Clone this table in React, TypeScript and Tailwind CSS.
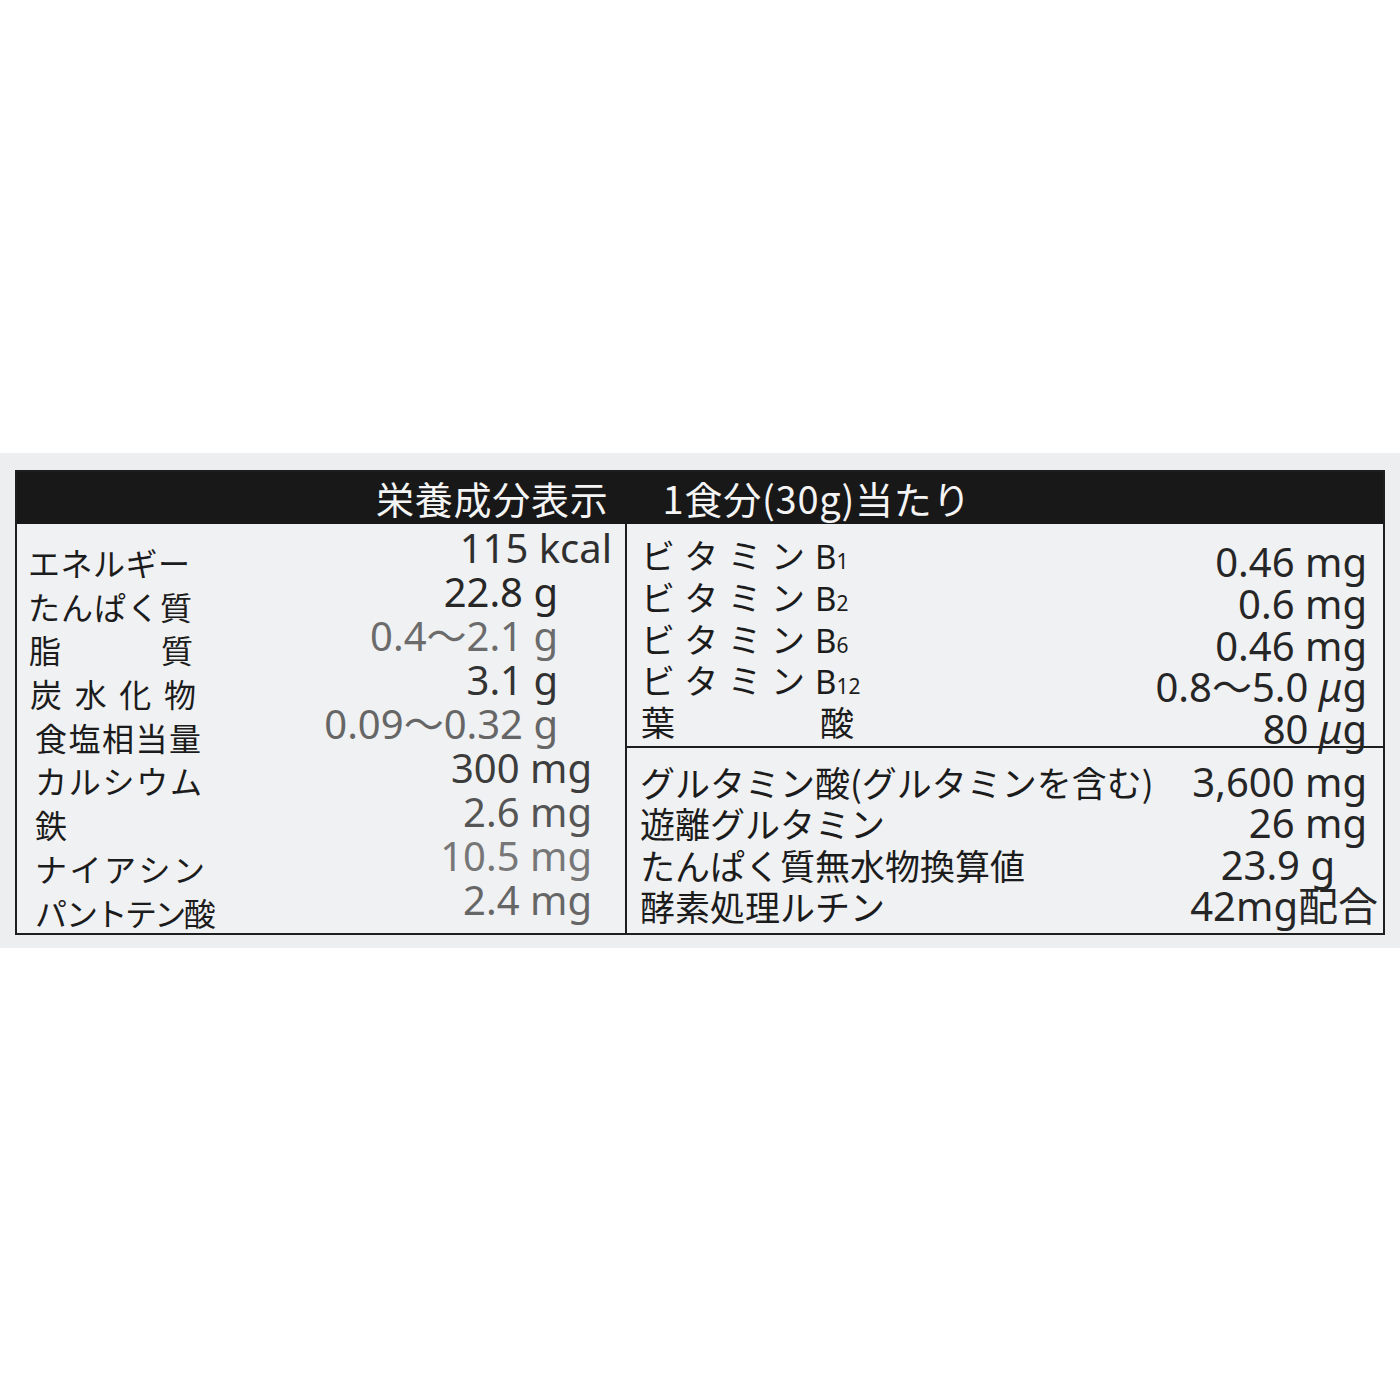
import type { ReactNode } from "react"

const cjk = "font-['Noto_Sans_CJK_JP','Noto_Sans',sans-serif]"
const num = "font-['Noto_Sans','Noto_Sans_CJK_JP',sans-serif]"

const Spread = ({ text, w }: { text: string; w: string }) => (
	<span className={`flex justify-between ${w}`}>
		{[...text].map((c, i) => (
			<span key={i}>{c}</span>
		))}
	</span>
)

const mu = (head: string) => (
	<>
		{head} <span className="italic">μ</span>g
	</>
)

interface LeftRow {
	label: string
	w: string
	pl: string
	value: string
	pr: string
	tone: string
}

const leftRows: LeftRow[] = [
	{ label: "エネルギー", w: "w-[162px]", pl: "pl-[11px]", value: "115 kcal", pr: "pr-[13px]", tone: "text-[#2f2f2f]" },
	{ label: "たんぱく質", w: "w-[164px]", pl: "pl-[11px]", value: "22.8 g", pr: "pr-[67px]", tone: "text-[#272727]" },
	{ label: "脂質", w: "w-[164px]", pl: "pl-[12px]", value: "0.4～2.1 g", pr: "pr-[67px]", tone: "text-[#6b6b6b]" },
	{ label: "炭水化物", w: "w-[166px]", pl: "pl-[13px]", value: "3.1 g", pr: "pr-[67px]", tone: "text-[#333333]" },
	{ label: "食塩相当量", w: "w-[166px]", pl: "pl-[18px]", value: "0.09～0.32 g", pr: "pr-[67px]", tone: "text-[#666666]" },
	{ label: "カルシウム", w: "w-[167px]", pl: "pl-[18px]", value: "300 mg", pr: "pr-[33px]", tone: "text-[#3c3c3c]" },
	{ label: "鉄", w: "w-[32px]", pl: "pl-[18px]", value: "2.6 mg", pr: "pr-[33px]", tone: "text-[#555555]" },
	{ label: "ナイアシン", w: "w-[170px]", pl: "pl-[18px]", value: "10.5 mg", pr: "pr-[33px]", tone: "text-[#777777]" },
	{ label: "", w: "", pl: "pl-[18px]", value: "2.4 mg", pr: "pr-[33px]", tone: "text-[#666666]" },
]

const vitamins: { sub: string; value: ReactNode }[] = [
	{ sub: "1", value: "0.46 mg" },
	{ sub: "2", value: "0.6 mg" },
	{ sub: "6", value: "0.46 mg" },
	{ sub: "12", value: mu("0.8～5.0") },
]

const lowerRows = [
	{ label: "グルタミン酸(グルタミンを含む)", value: "3,600 mg", pr: "pr-[16px]" },
	{ label: "遊離グルタミン", value: "26 mg", pr: "pr-[16px]" },
	{ label: "たんぱく質無水物換算値", value: "23.9 g", pr: "pr-[48px]" },
	{ label: "酵素処理ルチン", value: "42mg配合", pr: "pr-[5px]" },
]

export default function App() {
	return (
		<div className={`w-[1400px] h-[1400px] bg-white pt-[453px] ${cjk} text-[#1c1c1c]`}>
			<div className="h-[495px] bg-[#eceef0] pt-[17px] pl-[15px]">
				<div className="w-[1370px] border-2 border-[#1e1e1e] bg-[#f0f1f3]">
					{/* header bar */}
					<div className="h-[52px] bg-[#181818] flex items-center pl-[359px] text-[#f4f4f4] text-[38px] leading-none">
						<span className="tracking-[0.02em]">栄養成分表示</span>
						<span className="ml-[54px] tracking-[0.02em]">1食分(30g)当たり</span>
					</div>

					<div className="grid grid-cols-[610px_1fr] h-[409px]">
						{/* left column */}
						<div className="flex border-r-2 border-[#1e1e1e]">
							<div className="flex flex-col pt-[17px] text-[32px]">
								{leftRows.map((r, i) => (
									<div key={i} className={`h-[43.7px] leading-[43.7px] flex ${r.pl}`}>
										{r.label ? (
											<Spread text={r.label} w={r.w} />
										) : (
											<span className="tracking-[-0.08em]">パントテン酸</span>
										)}
									</div>
								))}
							</div>
							<div className={`flex-1 flex flex-col items-end pt-[2px] text-[40px] ${num}`}>
								{leftRows.map((r, i) => (
									<div key={i} className={`leading-[44px] whitespace-nowrap ${r.pr} ${r.tone}`}>
										{r.value}
									</div>
								))}
							</div>
						</div>

						{/* right column */}
						<div className="flex flex-col">
							<div className="h-[224px] border-b-2 border-[#1e1e1e] flex justify-between">
								<div className="flex flex-col pt-[10px] pl-[14px] text-[34px]">
									{vitamins.map((v, i) => (
										<div key={i} className="h-[41.75px] leading-[41.75px] flex items-baseline">
											<Spread text="ビタミン" w="w-[164px]" />
											<span className={`ml-[10px] text-[33px] ${num}`}>
												B<span className="text-[21px]">{v.sub}</span>
											</span>
										</div>
									))}
									<div className="h-[41.75px] leading-[41.75px] flex">
										<Spread text="葉酸" w="w-[213px]" />
									</div>
								</div>
								<div className={`flex flex-col items-end pt-[17px] pr-[16px] text-[40px] text-[#262626] ${num}`}>
									{vitamins.map((v, i) => (
										<div key={i} className="leading-[41.75px] whitespace-nowrap">
											{v.value}
										</div>
									))}
									<div className="leading-[41.75px] whitespace-nowrap">{mu("80")}</div>
								</div>
							</div>

							<div className="flex flex-col pt-[13px] pl-[13px]">
								{lowerRows.map((r, i) => (
									<div key={i} className="h-[41.3px] flex justify-between items-baseline">
										<span className="text-[35px] leading-[41.3px] whitespace-nowrap">{r.label}</span>
										<span className={`text-[40px] leading-[41.3px] text-[#262626] whitespace-nowrap ${num} ${r.pr}`}>
											{r.value}
										</span>
									</div>
								))}
							</div>
						</div>
					</div>
				</div>
			</div>
		</div>
	)
}
